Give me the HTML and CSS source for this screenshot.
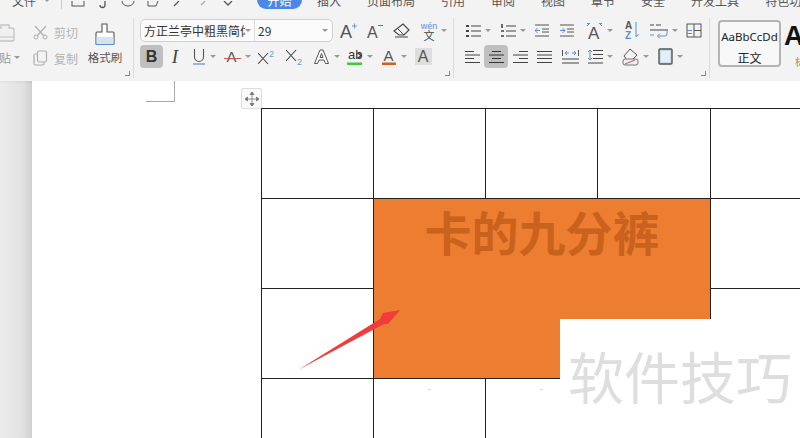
FILE: index.html
```html
<!DOCTYPE html>
<html lang="zh-CN">
<head>
    <meta charset="UTF-8">
    <meta name="viewport" content="width=device-width, initial-scale=1.0">
    <title>卡的九分裤</title>
    <link rel="stylesheet" href="styles.css">
</head>
<body>
    <div class="tabs">
        <div class="tabs-inner">
            <span class="file-menu">文件</span>
            <i class="caret file-caret"></i>
            <span class="tabs-sep"></span>
            <div class="quick">
                <svg width="14" height="8" viewBox="0 0 14 8"><rect x="1" y="-6" width="12" height="11" fill="none" stroke="#555"/></svg>
                <svg width="14" height="8" viewBox="0 0 14 8"><path d="M9 0v4a2.500 2.500 0 0 1-5 0" fill="none" stroke="#555" stroke-width="1.300"/></svg>
                <svg width="14" height="8" viewBox="0 0 14 8"><path d="M1 0a6 5 0 0 0 12 0" fill="none" stroke="#555"/></svg>
                <svg width="14" height="8" viewBox="0 0 14 8"><path d="M2 0v5h8l2-5" fill="none" stroke="#555"/></svg>
                <svg width="14" height="8" viewBox="0 0 14 8"><path d="M3 5l5-5" fill="none" stroke="#555" stroke-width="1.300"/></svg>
                <svg width="14" height="8" viewBox="0 0 14 8"><path d="M9 0L5 4" fill="none" stroke="#aaa" stroke-width="1.300"/></svg>
                <svg width="14" height="8" viewBox="0 0 14 8"><path d="M3 0l4 4 4-4" fill="none" stroke="#555" stroke-width="1.300"/></svg>
            </div>
            <span class="tab tab-active">开始</span>
            <span class="tab">插入</span>
            <span class="tab">页面布局</span>
            <span class="tab">引用</span>
            <span class="tab">审阅</span>
            <span class="tab">视图</span>
            <span class="tab">章节</span>
            <span class="tab">安全</span>
            <span class="tab">开发工具</span>
            <span class="tab">特色功能</span>
        </div>
    </div>

    <div class="ribbon">
        <div class="group group-clip">
            <div class="paste">
                <svg width="16" height="23" viewBox="0 0 16 23"><path d="M-3 5h4V2h8v3h3a2 2 0 0 1 2 2v9a2 2 0 0 1-2 2H-3z" fill="#f0f0f0" stroke="#c4c4c4" stroke-width="1.300"/><path d="M-3 14h18" stroke="#c4c4c4"/></svg>
                <div class="paste-label"><span>贴</span><i class="caret"></i></div>
            </div>
            <div class="clip-col">
                <div class="clip-row">
                    <svg width="15" height="15" viewBox="0 0 15 15"><path d="M2 1l9 10M13 1L4 11" fill="none" stroke="#b0b0b0" stroke-width="1.200"/><circle cx="3" cy="12" r="2" fill="none" stroke="#b0b0b0"/><circle cx="12" cy="12" r="2" fill="none" stroke="#b0b0b0"/></svg>
                    <span>剪切</span>
                </div>
                <div class="clip-row">
                    <svg width="15" height="16" viewBox="0 0 15 16"><rect x="4.500" y="1" width="9" height="11" rx="1.500" fill="none" stroke="#b0b0b0" stroke-width="1.200"/><path d="M4 4H2.500A1.500 1.500 0 0 0 1 5.500v8A1.500 1.500 0 0 0 2.500 15h7a1.500 1.500 0 0 0 1.500-1.500V12" fill="none" stroke="#b0b0b0" stroke-width="1.200"/></svg>
                    <span>复制</span>
                </div>
            </div>
            <div class="brush">
                <svg width="22" height="23" viewBox="0 0 22 23"><path d="M8 1h5v8h6a1 1 0 0 1 1 1v11H2V10a1 1 0 0 1 1-1h5z" fill="#fff" stroke="#555" stroke-width="1.100"/><path d="M2.500 14h17v7h-17z" fill="#d5e4f3"/><path d="M2 21.500h18" stroke="#5b8fd0"/></svg>
                <span>格式刷</span>
            </div>
            <i class="launcher"></i>
        </div>

        <div class="group group-font">
            <div class="row">
                <div class="font-box">
                    <div class="font-name"><span class="font-text">方正兰亭中粗黑简体</span><i class="caret"></i></div>
                    <div class="font-size"><span>29</span><i class="caret"></i></div>
                </div>
                <div class="tool w26 first-tool"><svg width="18" height="18" viewBox="0 0 18 18"><text x="0" y="16" class="ic-a">A</text><path d="M12 4h5M14.500 1.500v5" stroke="#6b9bd2"/></svg></div>
                <div class="tool w26"><svg width="16" height="18" viewBox="0 0 16 18"><text x="0" y="16" class="ic-a ic-thin">A</text><path d="M11 3.500h5" stroke="#6b7280"/></svg></div>
                <div class="tool w27"><svg width="17" height="15" viewBox="0 0 17 15"><path d="M10 1l6 6-5 5H6L1 8z" fill="none" stroke="#444" stroke-width="1.100"/><path d="M4 5l7 7" stroke="#444"/><path d="M2 14h13" stroke="#444"/></svg></div>
                <div class="tool w38">
                    <div class="wen"><span class="wen-top">wén</span><span class="wen-bot">文</span></div>
                    <i class="caret"></i>
                </div>
            </div>
            <div class="row">
                <div class="tool w23 on bold-b">B</div>
                <div class="tool w24 ital-i">I</div>
                <div class="tool w34"><svg width="14" height="17" viewBox="0 0 14 17"><path d="M2.500 1v8a4.500 4.500 0 0 0 9 0V1" fill="none" stroke="#555" stroke-width="1.100"/><path d="M1 16h12" stroke="#5b8fd0" stroke-width="1.200"/></svg><i class="caret"></i></div>
                <div class="tool w32"><svg width="17" height="17" viewBox="0 0 17 17"><text x="2.500" y="14" class="ic-a ic-mid">A</text><path d="M0 10.500h17" stroke="#c45b5b"/></svg><i class="caret"></i></div>
                <div class="tool w28"><svg width="18" height="16" viewBox="0 0 18 16"><path d="M0 4l10 11M10 4L0 15" stroke="#444" stroke-width="1.100"/><text x="11" y="8" class="ic-sup">2</text></svg></div>
                <div class="tool w28"><svg width="18" height="16" viewBox="0 0 18 16"><path d="M0 1l10 11M10 1L0 12" stroke="#444" stroke-width="1.100"/><text x="11" y="16" class="ic-sub">2</text></svg></div>
                <div class="tool w34"><svg width="17" height="17" viewBox="0 0 17 17"><path d="M1.500 15.500L7 2h3l5.500 13.500h-3L11 12H6l-1.500 3.500zM7 9.500h3L8.500 5.500z" fill="#fff" stroke="#555"/></svg><i class="caret"></i></div>
                <div class="tool w34"><svg width="16" height="18" viewBox="0 0 16 18"><text x="1" y="11" class="ic-ab">ab</text><path d="M11 5l3 2.500-3 3" fill="none" stroke="#333" stroke-width="1.300"/><rect y="14.500" width="15" height="2.500" fill="#3ecb35"/></svg><i class="caret"></i></div>
                <div class="tool w34"><svg width="15" height="18" viewBox="0 0 15 18"><text x="1.500" y="13" class="ic-a ic-mid">A</text><rect y="14.500" width="14" height="2.500" fill="#c8641e"/></svg><i class="caret"></i></div>
                <div class="tool w24"><span class="char-shade">A</span></div>
            </div>
            <i class="launcher"></i>
        </div>

        <div class="group group-para">
            <div class="row">
                <div class="tool w36"><svg width="15" height="14" viewBox="0 0 15 14"><path d="M5 2h10M5 7h10M5 12h10" stroke="#444" stroke-width="1.100"/><path d="M0 2h3M0 7h3M0 12h3" stroke="#444" stroke-width="2"/></svg><i class="caret"></i></div>
                <div class="tool w34"><svg width="15" height="14" viewBox="0 0 15 14"><path d="M5 2h10M5 7h10M5 12h10" stroke="#444" stroke-width="1.100"/><path d="M1 0v4M0 7h3M0 12h3" stroke="#444" stroke-width="1.600"/></svg><i class="caret"></i></div>
                <div class="tool w24"><svg width="14" height="13" viewBox="0 0 14 13"><path d="M0 1h14M7 5h7M7 8h7M0 12h14" stroke="#555"/><path d="M5 6.500H0M2.500 4L0 6.500 2.500 9" fill="none" stroke="#5b8fd0"/></svg></div>
                <div class="tool w26"><svg width="14" height="13" viewBox="0 0 14 13"><path d="M0 1h14M7 5h7M7 8h7M0 12h14" stroke="#555"/><path d="M0 6.500h5M2.500 4L5 6.500 2.500 9" fill="none" stroke="#5b8fd0"/></svg></div>
                <div class="tool w38"><svg width="17" height="19" viewBox="0 0 17 19"><text x="2" y="18" class="ic-a ic-tall">A</text><path d="M1 5l3-3M1 2.500h3M16 5l-3-3M16 2.500h-3" fill="none" stroke="#5b8fd0"/></svg><i class="caret"></i></div>
                <div class="tool w28"><svg width="14" height="19" viewBox="0 0 14 19"><text x="0" y="8" class="ic-sort">A</text><text x="0" y="18" class="ic-sort ic-blue">Z</text><path d="M11 1v15M11 16l2.500-3" fill="none" stroke="#5b8fd0"/></svg></div>
                <div class="tool w36"><svg width="18" height="16" viewBox="0 0 18 16"><path d="M0 2h4M6 2h5M0 7h18" stroke="#444"/><path d="M0 12h4M17 7v4a2 2 0 0 1-2 2H8M10 10.500L7.500 13l2.500 2.500" fill="none" stroke="#5b8fd0"/></svg><i class="caret"></i></div>
                <div class="tool w24"><svg width="16" height="15" viewBox="0 0 16 15"><rect x="1" y="1" width="14" height="13" fill="none" stroke="#555"/><path d="M8 1v13M8 7.500h7" stroke="#555"/><path d="M1 7.500h5M1 10.500h5" stroke="#5b8fd0"/></svg></div>
            </div>
            <div class="row">
                <div class="tool w24"><svg width="15" height="14" viewBox="0 0 15 14"><path d="M0 1.500h9M0 5h15M0 8.500h9M0 12.500h15" stroke="#444"/></svg></div>
                <div class="tool w24 on"><svg width="15" height="14" viewBox="0 0 15 14"><path d="M3 1.500h9M0 5h15M3 8.500h9M0 12.500h15" stroke="#333"/></svg></div>
                <div class="tool w24"><svg width="15" height="14" viewBox="0 0 15 14"><path d="M6 1.500h9M0 5h15M6 8.500h9M0 12.500h15" stroke="#444"/></svg></div>
                <div class="tool w24"><svg width="15" height="14" viewBox="0 0 15 14"><path d="M0 1.500h15M0 5h15M0 8.500h15M0 12.500h15" stroke="#444"/></svg></div>
                <div class="tool w28"><svg width="17" height="14" viewBox="0 0 17 14"><path d="M.5 0v6M16.500 0v6" stroke="#555"/><path d="M3 3h4M3 3l2-2M3 3l2 2M14 3h-4M14 3l-2-2M14 3l-2 2" fill="none" stroke="#5b8fd0"/><path d="M0 9h17M0 13h17" stroke="#444"/></svg></div>
                <div class="tool w32"><svg width="15" height="15" viewBox="0 0 15 15"><path d="M5 1.500h10M5 5.500h10M5 9.500h10M0 14h15" stroke="#444"/><path d="M2 1v10M0 3l2-2 2 2M0 9l2 2 2-2" fill="none" stroke="#5b8fd0"/></svg><i class="caret"></i></div>
                <div class="tool w38"><svg width="17" height="18" viewBox="0 0 17 18"><path d="M8 1l7 6-5 5H5L2 8z" fill="none" stroke="#555"/><rect x="1" y="11" width="15" height="6" rx="2" fill="#eee" stroke="#777"/><path d="M3 16l10-4" stroke="#c45b5b"/></svg><i class="caret"></i></div>
                <div class="tool w32"><svg width="15" height="17" viewBox="0 0 15 17"><rect x="1" y="1" width="13" height="15" rx="1" fill="#c9dcef" stroke="#555" stroke-width="1.400"/><rect x="3" y="3" width="9" height="11" fill="#e4eef7"/></svg><i class="caret"></i></div>
            </div>
            <i class="launcher"></i>
        </div>

        <div class="group-style">
            <div class="style-box">
                <span class="style-sample">AaBbCcDd</span>
                <span class="style-name">正文</span>
            </div>
            <div class="style-next">
                <span class="next-sample">A</span>
                <span class="next-name">标</span>
            </div>
        </div>
    </div>

    <div class="workspace">
        <div class="gutter"></div>
        <div class="page">
            <span class="crop-mark"></span>
            <span class="move-handle">
                <svg width="16" height="16" viewBox="0 0 16 16"><path d="M8 1v14M1 8h14M8 1L6 3.500h4zM8 15l-2-2.500h4zM1 8l2.500-2v4zM15 8l-2.500-2v4z" fill="#777" stroke="#777" stroke-width=".8"/></svg>
            </span>
            <table class="doc-table">
                <colgroup>
                    <col class="c1"><col class="c2"><col class="c3"><col class="c4"><col class="c5">
                </colgroup>
                <tr><td></td><td></td><td></td><td></td><td></td></tr>
                <tr><td></td><td class="merged" colspan="3" rowspan="2">卡的九分裤</td><td></td></tr>
                <tr><td></td><td></td></tr>
                <tr><td></td><td class="speck">-</td><td class="speck">-</td><td></td><td></td></tr>
            </table>
            <svg class="arrow" width="102" height="60" viewBox="0 0 102 60"><polygon points="0,60 82,9 85,3 102,0 90,14 86,14" fill="#f23c3c"/></svg>
            <div class="watermark">软件技巧</div>
        </div>
    </div>
</body>
</html>
```

FILE: styles.css
```css
html, body {
    margin: 0;
    height: 100%;
}
body {
    width: 800px;
    height: 438px;
    overflow: hidden;
    background-color: #fff;
    font-family: "Noto Sans CJK SC", "Liberation Sans", sans-serif;
    color: #444;
}

/* top menu row, only the bottom of it is on screen */
.tabs {
    height: 18px;
    overflow: hidden;
    background-color: #f3f3f3;
}
.tabs-inner {
    display: flex;
    align-items: center;
    height: 18px;
    margin-top: -9px;
    font-size: 12px;
    color: #555;
}
.tabs-inner > * {
    flex: none;
}
.file-menu {
    width: 24px;
    margin-left: 12px;
    white-space: nowrap;
}
.file-caret {
    margin-left: 8px;
}
.tabs-sep {
    width: 1px;
    height: 18px;
    margin-left: 11px;
    background-color: #ccc;
}
.quick {
    display: flex;
    gap: 11px;
    width: 186px;
    margin-left: 9px;
    padding-top: 9px;
}
.quick svg {
    display: block;
}
.tab {
    margin-right: 26px;
    white-space: nowrap;
}
.tab-active {
    width: 45px;
    height: 17px;
    margin-right: 15px;
    border-radius: 0 0 9px 9px;
    background-color: #4c88e6;
    color: #fff;
    text-align: center;
    line-height: 17px;
}

/* ribbon */
.ribbon {
    display: flex;
    height: 63px;
    background-color: #f3f3f3;
    box-shadow: 0 1px 3px rgba(0,0,0,0.06);
    position: relative;
}
.group {
    position: relative;
    flex: none;
    height: 60px;
    border-right: 1px solid #dcdcdc;
}
.launcher {
    position: absolute;
    right: 3px;
    bottom: 2px;
    width: 4px;
    height: 4px;
    border-right: 1px solid #888;
    border-bottom: 1px solid #888;
}
.caret {
    display: block;
    flex: none;
    width: 0;
    height: 0;
    border-left: 3px solid transparent;
    border-right: 3px solid transparent;
    border-top: 3px solid #999;
}

.group-clip {
    display: flex;
    width: 133px;
}
.paste {
    display: flex;
    flex-direction: column;
    width: 33px;
    padding-top: 5px;
}
.paste-label {
    display: flex;
    align-items: center;
    gap: 3px;
    margin-top: 3px;
    margin-left: -1px;
    font-size: 12px;
    color: #9a9a9a;
}
.clip-col {
    display: flex;
    flex-direction: column;
    width: 54px;
    padding-top: 5px;
    gap: 8px;
}
.clip-row {
    display: flex;
    align-items: center;
    gap: 6px;
    height: 18px;
    font-size: 12px;
    color: #b4b4b4;
}
.brush {
    display: flex;
    flex-direction: column;
    align-items: center;
    width: 36px;
    padding-top: 5px;
    font-size: 11.500px;
    color: #555;
}
.brush span {
    margin-top: 3px;
    white-space: nowrap;
}

.group-font {
    width: 320px;
    padding-left: 6px;
    box-sizing: border-box;
    padding-top: 1px;
}
.group-para {
    width: 256px;
    padding-left: 6px;
    box-sizing: border-box;
    padding-top: 1px;
}
.row {
    display: flex;
    align-items: center;
    height: 23px;
    margin-bottom: 3px;
}
.tool {
    display: flex;
    flex: none;
    align-items: center;
    justify-content: center;
    gap: 4px;
    height: 23px;
    border-radius: 4px;
}
.tool svg {
    display: block;
    flex: none;
}
.tool.on {
    background-color: #bfbfbf;
}
.w23 { width: 23px; }
.w24 { width: 24px; }
.w26 { width: 26px; }
.w27 { width: 27px; }
.w28 { width: 28px; }
.w32 { width: 32px; }
.w34 { width: 34px; }
.w36 { width: 36px; }
.w38 { width: 38px; }
.first-tool {
    margin-left: 3px;
}

.font-box {
    display: flex;
    flex: none;
    width: 193px;
    height: 23px;
    box-sizing: border-box;
    border: 1px solid #cfcfcf;
    border-radius: 5px;
    background-color: #fbfbfb;
    font-size: 12px;
    color: #333;
}
.font-name {
    display: flex;
    align-items: center;
    width: 114px;
    padding: 0 3px 0 3px;
    box-sizing: border-box;
    border-right: 1px solid #dcdcdc;
}
.font-text {
    flex: 1;
    overflow: hidden;
    white-space: nowrap;
}
.font-size {
    display: flex;
    flex: 1;
    align-items: center;
    justify-content: space-between;
    padding: 0 4px 0 3px;
}

.bold-b {
    font-family: "Liberation Sans", sans-serif;
    font-size: 16px;
    font-weight: bold;
    color: #333;
}
.ital-i {
    font-family: "Liberation Serif", serif;
    font-size: 19px;
    font-style: italic;
    color: #444;
}
.ic-a {
    font-family: "Liberation Sans", sans-serif;
    font-size: 18px;
    fill: #555;
}
.ic-thin {
    font-size: 16px;
}
.ic-mid {
    font-size: 15px;
}
.ic-tall {
    font-size: 17px;
}
.ic-sup, .ic-sub {
    font-family: "Liberation Sans", sans-serif;
    font-size: 9px;
    fill: #6b9bd2;
}
.ic-ab {
    font-family: "Liberation Sans", sans-serif;
    font-size: 13px;
    fill: #333;
}
.ic-sort {
    font-family: "Liberation Sans", sans-serif;
    font-size: 10px;
    font-weight: bold;
    fill: #555;
}
.ic-blue {
    fill: #5b8fd0;
}
.wen {
    display: flex;
    flex-direction: column;
    align-items: center;
    width: 16px;
    margin-top: 3px;
    line-height: 1;
}
.wen-top {
    height: 7px;
    font-family: "Liberation Sans", sans-serif;
    font-size: 9px;
    line-height: 7px;
    color: #5b8fd0;
}
.wen-bot {
    font-size: 11px;
    color: #444;
}
.char-shade {
    display: block;
    width: 17px;
    height: 17px;
    background-color: #dedede;
    font-family: "Liberation Sans", sans-serif;
    font-size: 16px;
    line-height: 17px;
    text-align: center;
    color: #555;
}

.group-style {
    display: flex;
    flex: none;
    padding: 2px 0 0 8px;
}
.style-box {
    display: flex;
    flex-direction: column;
    align-items: center;
    width: 63px;
    height: 47px;
    box-sizing: border-box;
    padding-top: 6px;
    border: 2px solid #b4b4b4;
    border-radius: 4px;
    background-color: #f8f8f8;
    color: #222;
}
.style-sample {
    font-family: "Noto Sans", sans-serif;
    font-size: 11.500px;
    line-height: 18px;
    white-space: nowrap;
}
.style-name {
    margin-top: 4px;
    font-size: 12px;
    line-height: 15px;
}
.style-next {
    display: flex;
    flex-direction: column;
    margin-left: 3px;
}
.next-sample {
    padding-top: 1px;
    font-family: "Liberation Sans", sans-serif;
    font-size: 27px;
    font-weight: bold;
    line-height: 30px;
    color: #111;
}
.next-name {
    margin-top: 3px;
    margin-left: 11px;
    font-size: 10px;
    color: #b8923c;
}

/* document area */
.workspace {
    display: flex;
    height: 357px;
    overflow: hidden;
}
.gutter {
    flex: none;
    width: 32px;
    background: linear-gradient(to right, #ececec, #e2e2e2 70%, #cfcfcf);
}
.page {
    position: relative;
    flex: 1;
    padding: 27px 0 0 229px;
    background-color: #fff;
}
.crop-mark {
    position: absolute;
    left: 114px;
    top: 0;
    width: 28px;
    height: 20px;
    border-right: 1px solid #aaa;
    border-bottom: 1px solid #aaa;
}
.move-handle {
    position: absolute;
    left: 209px;
    top: 7px;
    display: flex;
    align-items: center;
    justify-content: center;
    width: 19px;
    height: 19px;
    border: 1px solid #ddd;
    border-radius: 2px;
    background-color: #fafafa;
}
.doc-table {
    width: 562px;
    table-layout: fixed;
    border-collapse: collapse;
}
.doc-table td {
    height: 89px;
    padding: 0;
    border: 1px solid #222;
}
.c1, .c2, .c3 { width: 112px; }
.c4, .c5 { width: 113px; }
.doc-table .merged {
    padding-top: 9px;
    background-color: #ed7d31;
    font-size: 47px;
    font-weight: bold;
    line-height: 46px;
    text-align: center;
    vertical-align: top;
    color: #c8621c;
}
.doc-table .speck {
    padding-top: 3px;
    font-size: 11px;
    line-height: 12px;
    text-align: center;
    vertical-align: top;
    color: #ccc;
}
.arrow {
    position: absolute;
    left: 266px;
    top: 229px;
}
.watermark {
    position: absolute;
    left: 528px;
    top: 238px;
    right: 0;
    bottom: 0;
    padding: 18px 0 0 8px;
    background-color: #fff;
    font-size: 56px;
    line-height: 76px;
    white-space: nowrap;
    color: #dedede;
}
```
